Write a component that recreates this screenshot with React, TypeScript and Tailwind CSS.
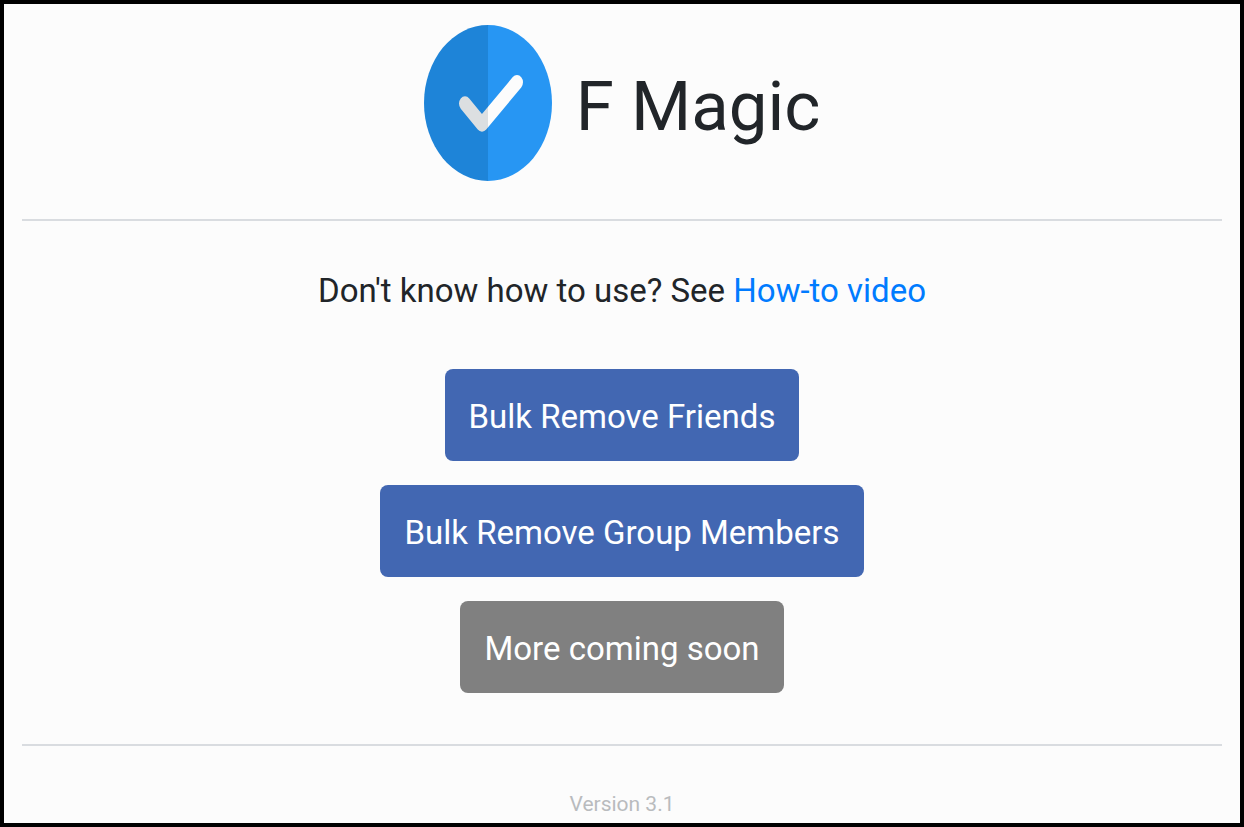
const actions = [
  { label: "Bulk Remove Friends", color: "bg-[#4267b2]" },
  { label: "Bulk Remove Group Members", color: "bg-[#4267b2]" },
  { label: "More coming soon", color: "bg-[#808080]" },
];

function Logo() {
  return (
    <svg
      viewBox="0 0 128 128"
      preserveAspectRatio="none"
      className="h-39 w-32 shrink-0"
      aria-hidden="true"
    >
      <defs>
        <linearGradient
          id="tick"
          gradientUnits="userSpaceOnUse"
          x1="0"
          y1="0"
          x2="128"
          y2="0"
        >
          <stop offset="0.5" stopColor="#dcdfe1" />
          <stop offset="0.5" stopColor="#fcfcfc" />
        </linearGradient>
      </defs>
      <path d="M64 0A64 64 0 0 0 64 128Z" fill="#1e84d8" />
      <path d="M64 0A64 64 0 0 1 64 128Z" fill="#2796f3" />
      <path
        d="M41 64.500L58 81.500L93 47"
        fill="none"
        stroke="url(#tick)"
        strokeWidth="12"
        strokeLinecap="round"
        strokeLinejoin="round"
      />
    </svg>
  );
}

export default function App() {
  return (
    <main className="flex min-h-screen flex-col border-4 border-black bg-[#fcfcfc] px-[18px] font-[Roboto,sans-serif] text-[#212529]">
      <header className="flex items-center justify-center gap-6 border-b-2 border-[#d9dce0] pt-[21px] pb-[38px]">
        <Logo />
        <h1 className="pt-2 text-[69px] leading-[84px]">F Magic</h1>
      </header>
      <section className="flex flex-col items-center border-b-2 border-[#d9dce0] pt-[42px] pb-[51px]">
        <p className="text-center text-[33px] leading-[56px]">
          Don't know how to use? See{" "}
          <a href="#how-to" className="text-[#007bff]">
            How-to video
          </a>
        </p>
        <div className="mt-[50px] flex flex-col items-center gap-6">
          {actions.map((action) => (
            <button
              key={action.label}
              type="button"
              className={`rounded-lg px-6 pt-5 pb-4 text-[33px] leading-[56px] text-white ${action.color}`}
            >
              {action.label}
            </button>
          ))}
        </div>
      </section>
      <footer className="pt-[42px] text-center text-[21px] leading-[32px] text-[#b9bbbe]">
        Version 3.1
      </footer>
    </main>
  );
}
